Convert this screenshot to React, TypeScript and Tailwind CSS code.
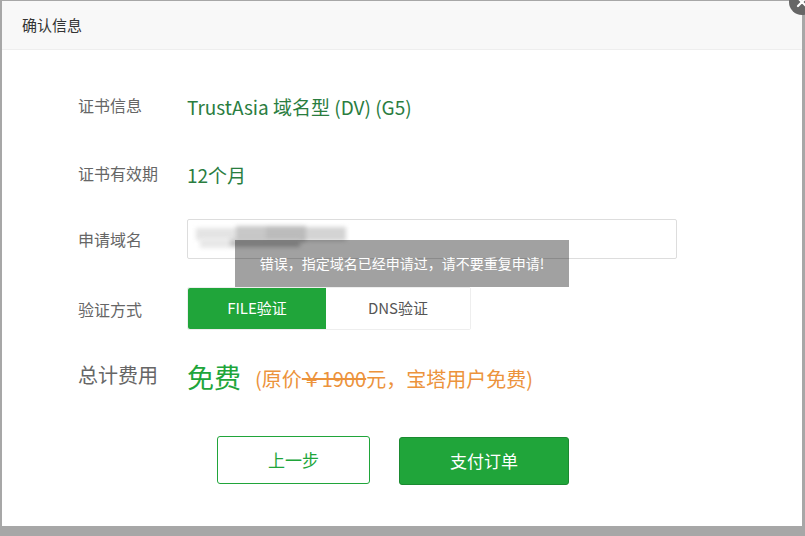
import React from "react";

const font = { fontFamily: '"Noto Sans CJK SC", "Open Sans", sans-serif' };

export default function App() {
  return (
    <div
      className="w-[805px] h-[536px] bg-[#a7a7a7] overflow-hidden pl-[2px] pt-[1px]"
      style={font}
    >
      <div className="relative w-[800px] h-[525px] bg-white">
        {/* header */}
        <div className="h-[49px] bg-[#f8f8f8] border-b border-[#eeeeee] flex items-center px-[20px] text-[15px] text-[#333]">
          确认信息
        </div>
        {/* close */}
        <div className="absolute right-[-13px] top-[-12px] w-[26px] h-[26px] rounded-full bg-[#666] flex items-center justify-center">
          <svg width="12" height="12" viewBox="0 0 12 12">
            <path d="M2 2L10 10M10 2L2 10" stroke="#fff" strokeWidth="2.2" strokeLinecap="round" />
          </svg>
        </div>

        <div className="pl-[76px] pt-[36px]">
          {/* row1 */}
          <div className="flex items-center h-[40px]">
            <div className="w-[109px] text-[16px] text-[#666] pb-[2px]">证书信息</div>
            <div className="text-[19px] text-[#2a7d3f] pt-[3px]">TrustAsia 域名型 (DV) (G5)</div>
          </div>
          {/* row2 */}
          <div className="flex items-center h-[40px] mt-[28px]">
            <div className="w-[109px] text-[16px] text-[#666] pb-[2px]">证书有效期</div>
            <div className="text-[19px] text-[#2a7d3f] pt-[3px]">12个月</div>
          </div>
          {/* row3 */}
          <div className="flex items-center h-[40px] mt-[25px]">
            <div className="w-[109px] text-[16px] text-[#666]">申请域名</div>
            <div className="relative w-[490px] h-[40px] border border-[#dddddd] rounded-[2px] overflow-hidden">
              <div className="absolute left-[8px] top-[6px] flex items-center blur-[2px]">
                <div className="w-[40px] h-[12px] bg-[#e4e4e4]" />
                <div className="w-[30px] h-[16px] bg-[#c8c8c8]" />
                <div className="w-[40px] h-[16px] bg-[#bcbcbc]" />
                <div className="w-[40px] h-[14px] bg-[#d4d4d4]" />
              </div>
              <div className="absolute left-[12px] top-[18px] flex items-center blur-[2px]">
                <div className="w-[30px] h-[10px] bg-[#e8e8e8]" />
                <div className="w-[70px] h-[8px] bg-[#c4c4c4]" />
              </div>
            </div>
          </div>
          {/* row4 */}
          <div className="flex items-center h-[43px] mt-[28px]">
            <div className="w-[109px] text-[16px] text-[#666]">验证方式</div>
            <div className="flex h-[43px] border border-[#eeeeee] rounded-[2px]">
              <div className="w-[138px] bg-[#20a53a] text-white text-[15px] flex items-center justify-center rounded-l-[2px]">
                FILE验证
              </div>
              <div className="w-[144px] bg-white text-[#555] text-[15px] flex items-center justify-center">
                DNS验证
              </div>
            </div>
          </div>
          {/* row5 */}
          <div className="flex items-center h-[40px] mt-[27px]">
            <div className="w-[109px] text-[20px] text-[#666] pb-[5px]">总计费用</div>
            <div className="flex items-center">
              <span className="text-[27px] text-[#20a53a]">免费</span>
              <span className="text-[20px] text-[#ec933c] ml-[14px] pt-[3px]">
                (原价<span className="line-through">￥1900</span>元，宝塔用户免费)
              </span>
            </div>
          </div>
        </div>

        {/* buttons */}
        <div className="flex pl-[215px] mt-[39px] gap-[29px]">
          <div className="w-[153px] h-[48px] border border-[#20a53a] rounded-[3px] text-[#20a53a] text-[17px] flex items-center justify-center">
            上一步
          </div>
          <div className="w-[170px] h-[48px] mt-[1px] border border-[#1b8a31] bg-[#20a53a] rounded-[3px] text-white text-[17px] flex items-center justify-center">
            支付订单
          </div>
        </div>

        {/* toast */}
        <div className="absolute left-[233px] top-[239px] w-[334px] h-[47px] bg-[rgba(0,0,0,0.37)] flex items-center justify-center text-white text-[14px]">
          错误，指定域名已经申请过，请不要重复申请!
        </div>
      </div>
    </div>
  );
}
